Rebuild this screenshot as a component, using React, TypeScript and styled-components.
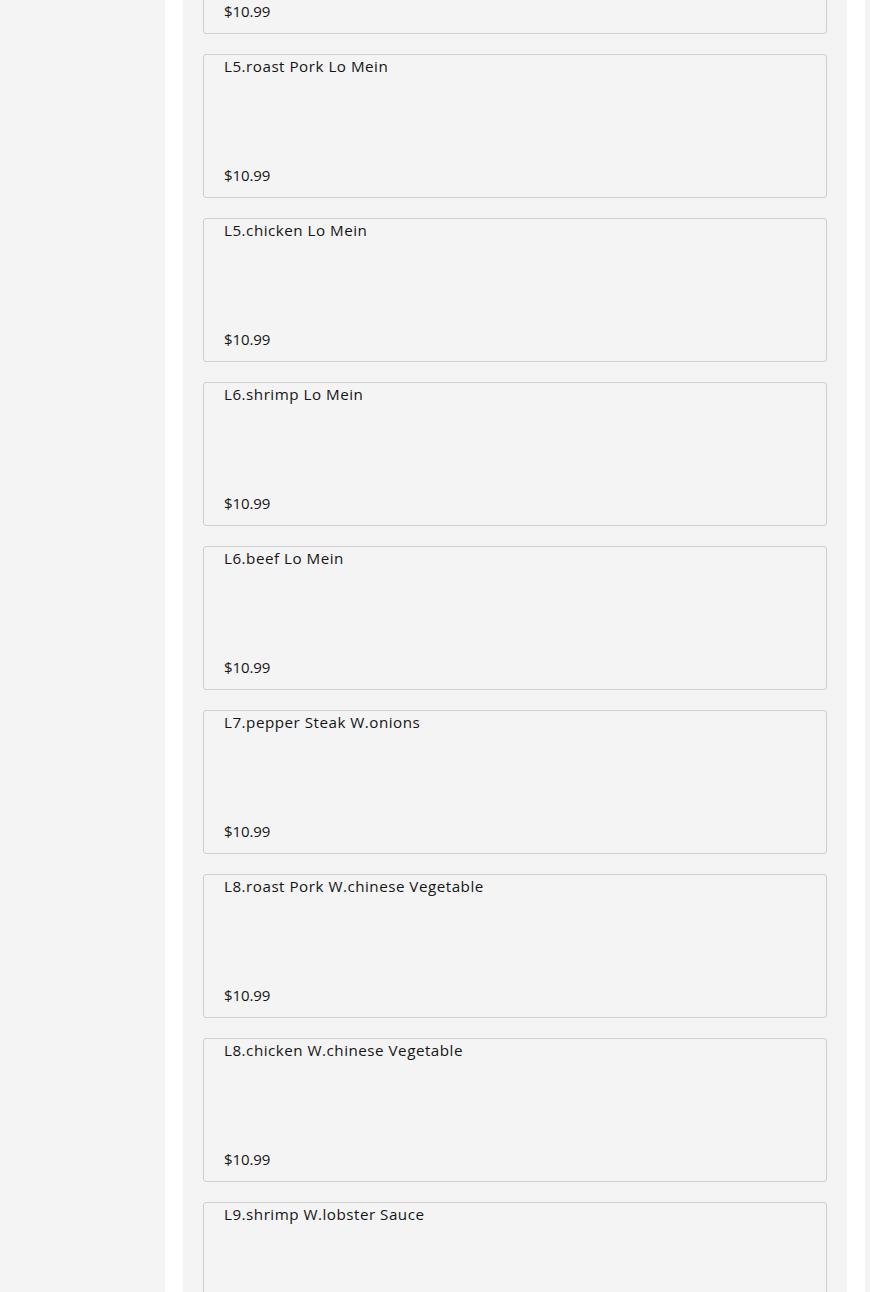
import React from "react";
import styled, { createGlobalStyle } from "styled-components";

const Global = createGlobalStyle`
  html, body { margin: 0; padding: 0; background: #ffffff; }
  body { font-family: "Open Sans", "Liberation Sans", sans-serif; color: #151515; overflow: hidden; }
`;

const Page = styled.div`
  display: grid;
  grid-template-columns: 165px 18px 664px 18px 5px;
  height: 1292px;
  overflow: hidden;
  background: #ffffff;
`;

const Sidebar = styled.aside`
  background: #f4f4f4;
  height: 100%;
`;

const Gutter = styled.div`
  background: #ffffff;
`;

const Main = styled.main`
  background: #f4f4f4;
  height: 100%;
  overflow: hidden;
  padding: 0 20px;
  box-sizing: border-box;
`;

const Edge = styled.div`
  background: #f3f3f3;
  height: 100%;
`;

const List = styled.div`
  display: flex;
  flex-direction: column;
  gap: 20px;
  margin-top: -110px;
`;

const Card = styled.div`
  height: 144px;
  box-sizing: border-box;
  border: 1px solid #cfcfcf;
  border-radius: 3px;
  background: #f4f4f4;
  padding: 1px 20px 12px 20px;
  display: flex;
  flex-direction: column;
  justify-content: space-between;
`;

const Title = styled.div`
  font-size: 15.2px;
  line-height: 20px;
  font-weight: 500;
  letter-spacing: 0.5px;
  color: #151515;
`;

const Price = styled.div`
  font-size: 15px;
  line-height: 20px;
  font-weight: 500;
  letter-spacing: -0.1px;
  color: #151515;
`;

const items = [
  "L4.beef Lo Mein",
  "L5.roast Pork Lo Mein",
  "L5.chicken Lo Mein",
  "L6.shrimp Lo Mein",
  "L6.beef Lo Mein",
  "L7.pepper Steak W.onions",
  "L8.roast Pork W.chinese Vegetable",
  "L8.chicken W.chinese Vegetable",
  "L9.shrimp W.lobster Sauce",
];

export default function App() {
  return (
    <>
      <Global />
      <Page>
        <Sidebar />
        <Gutter />
        <Main>
          <List>
            {items.map((t) => (
              <Card key={t}>
                <Title>{t}</Title>
                <Price>$10.99</Price>
              </Card>
            ))}
          </List>
        </Main>
        <Gutter />
        <Edge />
      </Page>
    </>
  );
}
